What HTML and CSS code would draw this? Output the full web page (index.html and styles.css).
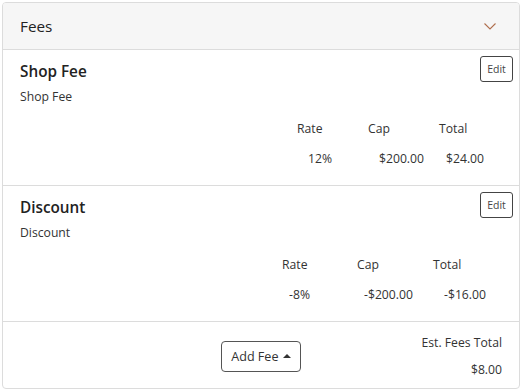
FILE: index.html
```html
<!DOCTYPE html>
<html lang="en">
<head>
    <meta charset="UTF-8">
    <title>Fees</title>
    <link rel="stylesheet" href="styles.css">
</head>
<body>

    <div class="card">
        <div class="card-header">
            <span class="card-title">Fees</span>
            <svg class="chevron" width="12" height="7" viewBox="0 0 12 7">
                <path d="M0.5 0.5 L6 6 L11.5 0.5" fill="none" stroke="#b0704f" stroke-width="1.1"/>
            </svg>
        </div>

        <!-- Shop Fee -->
        <div class="fee">
            <div class="fee-head">
                <span class="fee-name">Shop Fee</span>
                <button class="edit-btn">Edit</button>
            </div>
            <div class="fee-desc">Shop Fee</div>
            <div class="fee-table shop">
                <span>Rate</span>
                <span>Cap</span>
                <span>Total</span>
                <span class="val">12%</span>
                <span class="val">$200.00</span>
                <span class="val">$24.00</span>
            </div>
        </div>

        <!-- Discount -->
        <div class="fee">
            <div class="fee-head">
                <span class="fee-name">Discount</span>
                <button class="edit-btn">Edit</button>
            </div>
            <div class="fee-desc">Discount</div>
            <div class="fee-table discount">
                <span>Rate</span>
                <span>Cap</span>
                <span>Total</span>
                <span class="val">-8%</span>
                <span class="val">-$200.00</span>
                <span class="val">-$16.00</span>
            </div>
        </div>

        <div class="card-footer">
            <div></div>
            <button class="add-btn">Add Fee <span class="caret"></span></button>
            <div class="totals">
                <div>Est. Fees Total</div>
                <div class="total-amount">$8.00</div>
            </div>
        </div>
    </div>

</body>
</html>
```

FILE: styles.css
```css
body {
    margin: 0;
    padding: 2px 3px 0 2px;
    font-family: "Open Sans", "Noto Sans", sans-serif;
    font-size: 12.2px;
    color: #333;
    background-color: #fff;
}
.card {
    border: 1px solid #dcdcdc;
    border-radius: 4px;
    overflow: hidden;
}
.card-header {
    display: flex;
    justify-content: space-between;
    align-items: center;
    padding: 12px 23px 12px 17px;
    background-color: #f6f6f6;
    border-bottom: 1px solid #dcdcdc;
}
.card-title {
    font-size: 15.3px;
    line-height: 22px;
    color: #222;
}
.chevron {
    display: block;
}
.fee {
    padding: 6px 6px 17px 17px;
    border-bottom: 1px solid #dcdcdc;
}
.fee-head {
    display: flex;
    justify-content: space-between;
    align-items: flex-start;
}
.fee-name {
    margin-top: 4px;
    font-size: 15.3px;
    font-weight: 600;
    line-height: 22px;
    color: #222;
}
.edit-btn {
    width: 33px;
    height: 26px;
    padding: 0;
    font-family: inherit;
    font-size: 10.5px;
    color: #444;
    background-color: #fff;
    border: 1px solid #444;
    border-radius: 3px;
}
.fee-desc {
    margin-top: 6px;
    line-height: 18px;
}
.fee-table {
    display: grid;
    justify-content: end;
    row-gap: 12px;
    margin: 14px 17px 0 0;
    line-height: 18px;
}
.fee-table.shop {
    grid-template-columns: 71px 71px 57px;
}
.fee-table.discount {
    grid-template-columns: 75px 76px 63px;
}
.shop .val:nth-child(4),
.shop .val:nth-child(5) {
    padding-left: 11px;
}
.shop .val:nth-child(6) {
    padding-left: 7px;
}
.discount .val:nth-child(4),
.discount .val:nth-child(5) {
    padding-left: 7px;
}
.discount .val:nth-child(6) {
    padding-left: 11px;
}
.card-footer {
    display: grid;
    grid-template-columns: 1fr auto 1fr;
    align-items: center;
    padding: 12px 17px 9px 17px;
}
.add-btn {
    height: 31px;
    padding: 0 9px;
    font-family: inherit;
    font-size: 12.6px;
    color: #333;
    background-color: #fff;
    border: 1px solid #555;
    border-radius: 4px;
}
.caret {
    display: inline-block;
    width: 0;
    height: 0;
    margin-left: 1px;
    vertical-align: 3px;
    border-left: 4px solid transparent;
    border-right: 4px solid transparent;
    border-bottom: 4px solid #333;
}
.totals {
    text-align: right;
    line-height: 18px;
}
.total-amount {
    margin-top: 9px;
}
```
